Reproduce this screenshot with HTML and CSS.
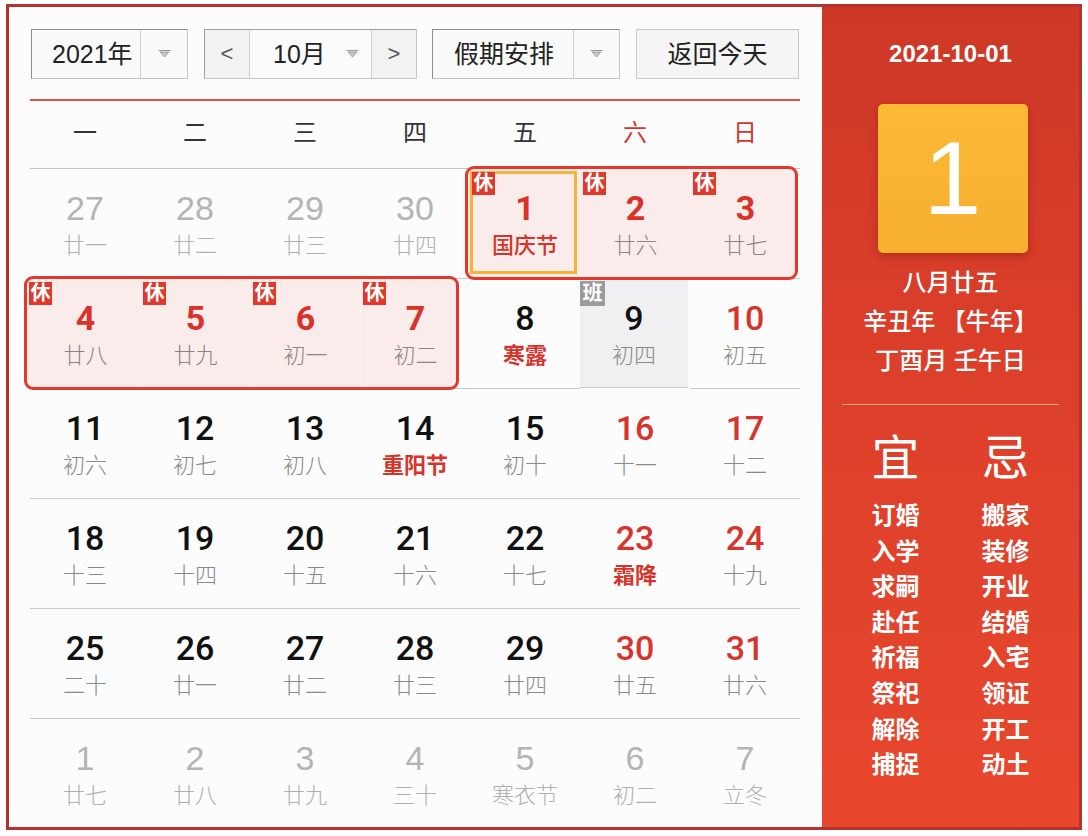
FILE: index.html
```html
<!DOCTYPE html>
<html lang="zh-CN">
<head>
<meta charset="utf-8">
<title>万年历</title>
<link rel="stylesheet" href="styles.css">
</head>
<body>
<div class="frame">
  <div class="main">
    <div class="toolbar">
      <div class="select year">
        <div class="val">2021年</div>
        <div class="arrow"><svg width="13" height="8" viewBox="0 0 13 8"><path d="M0.5 0.5 H12.5" stroke="#9a9a9a" stroke-width="1"/><path d="M2 2 L11 2 L6.5 7 Z" fill="#c9c9c9" stroke="#8d8d8d" stroke-width="0.8"/></svg></div>
      </div>
      <div class="select month">
        <div class="nav">&lt;</div>
        <div class="mval"><span>10月</span><svg width="13" height="8" viewBox="0 0 13 8"><path d="M0.5 0.5 H12.5" stroke="#9a9a9a" stroke-width="1"/><path d="M2 2 L11 2 L6.5 7 Z" fill="#c9c9c9" stroke="#8d8d8d" stroke-width="0.8"/></svg></div>
        <div class="nav">&gt;</div>
      </div>
      <div class="select holiday">
        <div class="val">假期安排</div>
        <div class="arrow"><svg width="13" height="8" viewBox="0 0 13 8"><path d="M0.5 0.5 H12.5" stroke="#9a9a9a" stroke-width="1"/><path d="M2 2 L11 2 L6.5 7 Z" fill="#c9c9c9" stroke="#8d8d8d" stroke-width="0.8"/></svg></div>
      </div>
      <div class="today-btn">返回今天</div>
    </div>
    <div class="redline"></div>
    <div class="weekdays">
      <div>一</div><div>二</div><div>三</div><div>四</div><div>五</div><div class="we">六</div><div class="we">日</div>
    </div>
    <div class="grid">
      <div class="cell other"><b>27</b><i>廿一</i></div>
      <div class="cell other"><b>28</b><i>廿二</i></div>
      <div class="cell other"><b>29</b><i>廿三</i></div>
      <div class="cell other"><b>30</b><i>廿四</i></div>
      <div class="cell hol today"><span class="badge">休</span><b>1</b><i class="fest">国庆节</i></div>
      <div class="cell hol"><span class="badge">休</span><b>2</b><i>廿六</i></div>
      <div class="cell hol"><span class="badge">休</span><b>3</b><i>廿七</i></div>

      <div class="cell hol"><span class="badge b1">休</span><b>4</b><i>廿八</i></div>
      <div class="cell hol"><span class="badge">休</span><b>5</b><i>廿九</i></div>
      <div class="cell hol"><span class="badge">休</span><b>6</b><i>初一</i></div>
      <div class="cell hol"><span class="badge b4">休</span><b>7</b><i>初二</i></div>
      <div class="cell"><b>8</b><i class="fest strong">寒露</i></div>
      <div class="cell work"><span class="badge gray">班</span><b>9</b><i>初四</i></div>
      <div class="cell we"><b>10</b><i>初五</i></div>

      <div class="cell"><b>11</b><i>初六</i></div>
      <div class="cell"><b>12</b><i>初七</i></div>
      <div class="cell"><b>13</b><i>初八</i></div>
      <div class="cell"><b>14</b><i class="fest strong">重阳节</i></div>
      <div class="cell"><b>15</b><i>初十</i></div>
      <div class="cell we"><b>16</b><i>十一</i></div>
      <div class="cell we"><b>17</b><i>十二</i></div>

      <div class="cell"><b>18</b><i>十三</i></div>
      <div class="cell"><b>19</b><i>十四</i></div>
      <div class="cell"><b>20</b><i>十五</i></div>
      <div class="cell"><b>21</b><i>十六</i></div>
      <div class="cell"><b>22</b><i>十七</i></div>
      <div class="cell we"><b>23</b><i class="fest strong">霜降</i></div>
      <div class="cell we"><b>24</b><i>十九</i></div>

      <div class="cell"><b>25</b><i>二十</i></div>
      <div class="cell"><b>26</b><i>廿一</i></div>
      <div class="cell"><b>27</b><i>廿二</i></div>
      <div class="cell"><b>28</b><i>廿三</i></div>
      <div class="cell"><b>29</b><i>廿四</i></div>
      <div class="cell we"><b>30</b><i>廿五</i></div>
      <div class="cell we"><b>31</b><i>廿六</i></div>

      <div class="cell other last"><b>1</b><i>廿七</i></div>
      <div class="cell other last"><b>2</b><i>廿八</i></div>
      <div class="cell other last"><b>3</b><i>廿九</i></div>
      <div class="cell other last"><b>4</b><i>三十</i></div>
      <div class="cell other last"><b>5</b><i>寒衣节</i></div>
      <div class="cell other last"><b>6</b><i>初二</i></div>
      <div class="cell other last"><b>7</b><i>立冬</i></div>

      <div class="holbox box1"></div>
      <div class="holbox box2"></div>
    </div>
  </div>
  <div class="side">
    <div class="date">2021-10-01</div>
    <div class="bigday">1</div>
    <div class="lunar">
      <div>八月廿五</div>
      <div>辛丑年 【牛年】</div>
      <div>丁酉月 壬午日</div>
    </div>
    <div class="divider"></div>
    <div class="yiji">
      <div class="col">
        <div class="head">宜</div>
        <ul>
          <li>订婚</li><li>入学</li><li>求嗣</li><li>赴任</li><li>祈福</li><li>祭祀</li><li>解除</li><li>捕捉</li>
        </ul>
      </div>
      <div class="col">
        <div class="head">忌</div>
        <ul>
          <li>搬家</li><li>装修</li><li>开业</li><li>结婚</li><li>入宅</li><li>领证</li><li>开工</li><li>动土</li>
        </ul>
      </div>
    </div>
  </div>
</div>
</body>
</html>
```

FILE: styles.css
```css
html, body {
  margin: 0;
  padding: 0;
  background: #ffffff;
}
body {
  font-family: "Liberation Sans", "Noto Sans CJK SC", sans-serif;
  color: #222;
}
.frame {
  width: 1076px;
  height: 826px;
  margin: 4px 0 0 6px;
  border: 3px solid #b5322d;
  box-sizing: border-box;
  display: flex;
  overflow: hidden;
}
.main {
  width: 813px;
  flex: none;
  background: #fcfcfc;
  padding: 22px 22px 0 21px;
  box-sizing: border-box;
}
/* toolbar */
.toolbar {
  display: flex;
  height: 50px;
  font-size: 25px;
  color: #222;
}
.select {
  display: flex;
  height: 50px;
  box-sizing: border-box;
  border: 1px solid;
  border-color: #8e8e8e #c6c6c6 #c6c6c6 #8e8e8e;
  background: #fafafa;
  line-height: 48px;
}
.year {
  width: 157px;
  margin-left: 1px;
}
.year .val {
  width: 108px;
  padding-left: 20px;
  box-sizing: border-box;
}
.arrow {
  flex: 1;
  border-left: 1px solid #d0d0d0;
  display: flex;
  align-items: center;
  justify-content: center;
}
.month {
  width: 213px;
  margin-left: 16px;
  border-color: #a0a0a0 #c6c6c6 #c6c6c6 #a0a0a0;
}
.nav {
  width: 44px;
  background: #f2f2f2;
  text-align: center;
  color: #555;
  font-size: 22px;
}
.mval {
  flex: 1;
  border-left: 1px solid #d0d0d0;
  border-right: 1px solid #d0d0d0;
  background: #fbfbfb;
  display: flex;
  align-items: center;
  padding-left: 23px;
  box-sizing: border-box;
}
.mval svg {
  margin-left: 20px;
}
.holiday {
  width: 188px;
  margin-left: 15px;
}
.holiday .val {
  width: 140px;
  padding-left: 21px;
  box-sizing: border-box;
}
.today-btn {
  width: 163px;
  height: 50px;
  margin-left: 16px;
  box-sizing: border-box;
  border: 1px solid #c8c8c8;
  background: #f5f5f5;
  text-align: center;
  line-height: 48px;
}
.redline {
  height: 2px;
  background: #dc5045;
  margin-top: 20px;
}
/* weekday header */
.weekdays {
  display: grid;
  grid-template-columns: repeat(7, 110px);
  height: 68px;
  box-sizing: border-box;
  border-bottom: 1px solid #c4c4c4;
  line-height: 64px;
  font-size: 24px;
  color: #333;
  text-align: center;
}
.weekdays .we {
  color: #d3362d;
}
/* grid */
.grid {
  position: relative;
  display: grid;
  grid-template-columns: repeat(7, 110px);
  grid-auto-rows: 110px;
}
.cell {
  position: relative;
  box-sizing: border-box;
  border-bottom: 1px solid #c8c8c8;
  padding-top: 19px;
  display: flex;
  flex-direction: column;
  align-items: center;
}
.cell.last {
  border-bottom: none;
}
.cell b {
  font-family: Roboto, "Liberation Sans", sans-serif;
  font-size: 34px;
  line-height: 40px;
  font-weight: 500;
  color: #111;
}
.cell i {
  font-style: normal;
  font-size: 22px;
  line-height: 36px;
  font-weight: 300;
  color: #8a8a8a;
}
.cell.other b {
  font-family: "Liberation Sans", sans-serif;
  font-weight: normal;
  color: #b4b4b4;
}
.cell.other i {
  color: #b0b0b0;
}
.cell.we b {
  color: #d6342c;
}
.cell.hol b {
  color: #d8322a;
  font-weight: bold;
}
.cell i.fest {
  color: #d6332b;
  font-weight: 500;
}
.cell i.strong {
  font-weight: bold;
}
.cell.hol + .cell.hol {
  border-left: 1px solid rgba(255, 255, 255, 0.8);
}
.cell.work {
  background: #f0f0f2;
  margin: 0 2px 1px 0;
}
.badge {
  position: absolute;
  top: 3px;
  left: 2px;
  width: 23px;
  height: 23px;
  background: #e0392c;
  color: #fff;
  font-size: 20px;
  line-height: 23px;
  font-weight: bold;
  text-align: center;
  z-index: 3;
}
.badge.b1 {
  left: -2px;
}
.badge.b4 {
  left: 2px;
}
.badge.gray {
  top: 2px;
  left: 0;
  background: #9b9b9b;
  width: 25px;
  height: 25px;
  line-height: 25px;
}
.cell.today::after {
  content: "";
  position: absolute;
  top: 2px;
  left: 0;
  right: 3px;
  bottom: 4px;
  border: 3px solid #f5b53b;
  z-index: 2;
}
.holbox {
  position: absolute;
  box-sizing: border-box;
  border: 3px solid #e2392c;
  border-radius: 9px;
  background: rgba(230, 50, 40, 0.08);
  z-index: 1;
  pointer-events: none;
}
.box1 {
  left: 435px;
  top: -3px;
  width: 333px;
  height: 114px;
}
.box2 {
  left: -6px;
  top: 107px;
  width: 435px;
  height: 114px;
}
/* right side */
.side {
  flex: 1;
  background: linear-gradient(180deg, #cd3827 0%, #dc3f2a 45%, #e8472d 100%);
  color: #fff;
  text-align: center;
  padding-top: 32px;
  box-sizing: border-box;
}
.date {
  font-size: 24px;
  font-weight: bold;
  line-height: 30px;
}
.bigday {
  width: 150px;
  height: 149px;
  margin: 35px auto 0;
  border-radius: 5px;
  background: linear-gradient(180deg, #fbb935 0%, #f7af30 100%);
  box-shadow: 0 3px 8px rgba(110, 20, 0, 0.35);
  font-size: 104px;
  line-height: 149px;
  font-weight: normal;
  position: relative;
  left: 2px;
}
.lunar {
  margin-top: 10px;
  font-size: 24px;
  line-height: 39px;
  font-weight: 500;
}
.divider {
  height: 1px;
  margin: 24px 20px 0;
  background: #f5a58c;
}
.yiji {
  display: flex;
  justify-content: center;
  margin-top: 26px;
}
.col {
  width: 110px;
}
.head {
  font-size: 48px;
  line-height: 56px;
}
.col ul {
  list-style: none;
  margin: 11px 0 0;
  padding: 0;
}
.col li {
  font-size: 24px;
  line-height: 35.6px;
  font-weight: bold;
}
```
